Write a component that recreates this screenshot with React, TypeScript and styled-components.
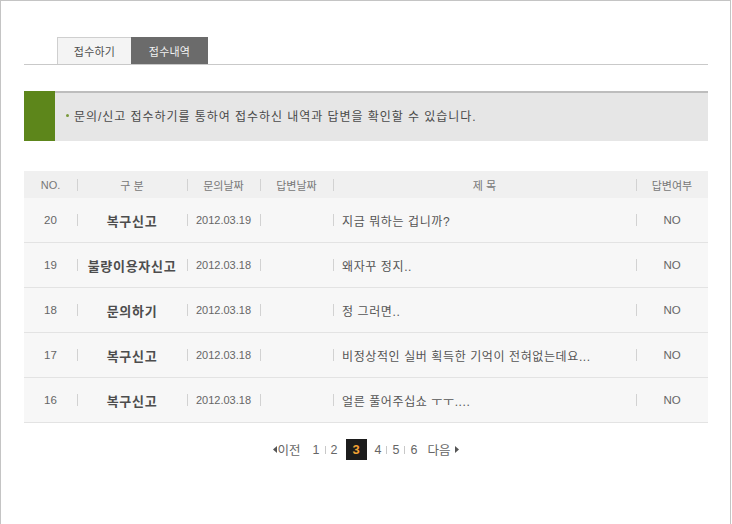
import styled, { createGlobalStyle, css } from 'styled-components';

const GlobalStyle = createGlobalStyle`
  html, body {
    margin: 0;
    padding: 0;
    background: #ffffff;
  }
  body {
    font-family: "Liberation Sans", "Noto Sans CJK KR", sans-serif;
    font-size: 12px;
    color: #555555;
  }
`;

const Frame = styled.div`
  box-sizing: border-box;
  width: 731px;
  height: 524px;
  border: 1px solid #c4c4c4;
  border-bottom: none;
  padding: 36px 22px 0 23px;
`;

const TabBar = styled.div`
  display: flex;
  padding-left: 33px;
  border-bottom: 1px solid #c9c9c9;
`;

const Tab = styled.div<{ $active?: boolean }>`
  box-sizing: border-box;
  height: 27px;
  display: flex;
  align-items: center;
  justify-content: center;
  font-size: 11px;
  letter-spacing: 0.2px;
  ${(p) =>
    p.$active
      ? css`
          width: 77px;
          background: #6b6b6b;
          color: #f2f2f2;
          border: 1px solid #6b6b6b;
          border-bottom: none;
        `
      : css`
          width: 74px;
          background: #f4f4f4;
          color: #4f4f4f;
          border: 1px solid #cfcfcf;
          border-right: none;
          border-bottom: none;
        `}
`;

const Notice = styled.div`
  display: flex;
  margin-top: 26px;
  height: 50px;
  box-sizing: border-box;
  background: #e6e6e6;
  border-top: 2px solid #bdbdbd;
`;

const NoticeMark = styled.div`
  width: 31px;
  margin-top: -2px;
  background: #5d861b;
`;

const NoticeText = styled.p`
  margin: 0;
  display: flex;
  align-items: center;
  gap: 5px;
  padding: 0 0 3px 11px;
  font-size: 12px;
  letter-spacing: 0.95px;
  color: #4a4a4a;
`;

const Dot = styled.span`
  width: 3px;
  height: 3px;
  border-radius: 50%;
  background: #7a9a3c;
`;

const Table = styled.div`
  margin-top: 30px;
`;

const columns = '53px 110px 73px 73px 303px 72px';

const HeadRow = styled.div`
  display: grid;
  grid-template-columns: ${columns};
  height: 27px;
  background: #f0f0f0;
`;

const Row = styled.div`
  display: grid;
  grid-template-columns: ${columns};
  height: 45px;
  box-sizing: border-box;
  background: #f7f7f7;
  border-bottom: 1px solid #e3e3e3;
`;

const Cell = styled.div<{ $sep?: boolean; $align?: 'left' | 'center' }>`
  display: flex;
  align-items: center;
  justify-content: ${(p) => (p.$align === 'left' ? 'flex-start' : 'center')};
  padding-left: ${(p) => (p.$align === 'left' ? '9px' : '0')};
  white-space: nowrap;
  overflow: hidden;
  ${(p) =>
    p.$sep &&
    css`
      background: linear-gradient(#d2d2d2, #d2d2d2) left center / 1px 12px no-repeat;
    `}
`;

const HeadText = styled.span`
  font-size: 11px;
  color: #777777;
`;

const NumText = styled.span`
  font-size: 11.5px;
  color: #666666;
`;

const Category = styled.span`
  font-size: 13px;
  font-weight: bold;
  color: #4d4d4d;
  letter-spacing: 0.7px;
`;

const DateText = styled.span`
  font-size: 11px;
  color: #666666;
`;

const Subject = styled.span`
  font-size: 12px;
  letter-spacing: 0.6px;
  color: #555555;
`;

const Pager = styled.div`
  display: flex;
  justify-content: center;
  align-items: center;
  margin-top: 16px;
  height: 21px;
  font-size: 12.5px;
  color: #666666;
`;

const PagerNav = styled.span<{ $next?: boolean }>`
  display: flex;
  align-items: center;
  gap: ${(p) => (p.$next ? '5px' : '1px')};
  margin: ${(p) => (p.$next ? '0 0 0 5px' : '0 7px 0 0')};
  color: #666666;
`;

const PageNum = styled.span`
  padding: 0 5px;
  color: #666666;
`;

const PageSep = styled.span`
  width: 1px;
  height: 8px;
  background: #c8c8c8;
`;

const PageCurrent = styled.span`
  width: 21px;
  height: 21px;
  margin: 0 3px;
  display: flex;
  align-items: center;
  justify-content: center;
  background: #1c1c1c;
  color: #f2a233;
  font-weight: bold;
  font-size: 13px;
`;

const Arrow = ({ dir }: { dir: 'left' | 'right' }) => (
  <svg width="4" height="7" viewBox="0 0 4 7">
    {dir === 'left' ? (
      <polygon points="4,0 4,7 0,3.5" fill="#555" />
    ) : (
      <polygon points="0,0 0,7 4,3.5" fill="#555" />
    )}
  </svg>
);

type Item = { no: number; kind: string; asked: string; answered: string; title: string; done: string };

const items: Item[] = [
  { no: 20, kind: '복구신고', asked: '2012.03.19', answered: '', title: '지금 뭐하는 겁니까?', done: 'NO' },
  { no: 19, kind: '불량이용자신고', asked: '2012.03.18', answered: '', title: '왜자꾸 정지..', done: 'NO' },
  { no: 18, kind: '문의하기', asked: '2012.03.18', answered: '', title: '정 그러면..', done: 'NO' },
  { no: 17, kind: '복구신고', asked: '2012.03.18', answered: '', title: '비정상적인 실버 획득한 기억이 전혀없는데요...', done: 'NO' },
  { no: 16, kind: '복구신고', asked: '2012.03.18', answered: '', title: '얼른 풀어주십쇼 ㅜㅜ....', done: 'NO' },
];

export default function App() {
  return (
    <>
      <GlobalStyle />
      <Frame>
        <TabBar>
          <Tab>접수하기</Tab>
          <Tab $active>접수내역</Tab>
        </TabBar>

        <Notice>
          <NoticeMark />
          <NoticeText>
            <Dot />
            문의/신고 접수하기를 통하여 접수하신 내역과 답변을 확인할 수 있습니다.
          </NoticeText>
        </Notice>

        <Table>
          <HeadRow>
            <Cell><HeadText>NO.</HeadText></Cell>
            <Cell $sep><HeadText>구 분</HeadText></Cell>
            <Cell $sep><HeadText>문의날짜</HeadText></Cell>
            <Cell $sep><HeadText>답변날짜</HeadText></Cell>
            <Cell $sep><HeadText>제 목</HeadText></Cell>
            <Cell $sep><HeadText>답변여부</HeadText></Cell>
          </HeadRow>
          {items.map((it) => (
            <Row key={it.no}>
              <Cell><NumText>{it.no}</NumText></Cell>
              <Cell $sep><Category>{it.kind}</Category></Cell>
              <Cell $sep><DateText>{it.asked}</DateText></Cell>
              <Cell $sep><DateText>{it.answered}</DateText></Cell>
              <Cell $sep $align="left"><Subject>{it.title}</Subject></Cell>
              <Cell $sep><NumText>{it.done}</NumText></Cell>
            </Row>
          ))}
        </Table>

        <Pager>
          <PagerNav>
            <Arrow dir="left" />
            이전
          </PagerNav>
          <PageNum>1</PageNum>
          <PageSep />
          <PageNum>2</PageNum>
          <PageCurrent>3</PageCurrent>
          <PageNum>4</PageNum>
          <PageSep />
          <PageNum>5</PageNum>
          <PageSep />
          <PageNum>6</PageNum>
          <PagerNav $next>
            다음
            <Arrow dir="right" />
          </PagerNav>
        </Pager>
      </Frame>
    </>
  );
}
